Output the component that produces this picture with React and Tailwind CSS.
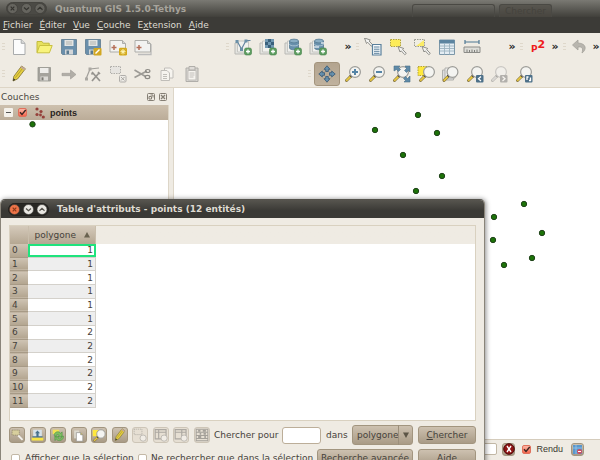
import React from 'react';

const TOOL_BUTTON = 'flex h-6 flex-1 items-center justify-center rounded-[3px]';
const BEVEL = 'rounded-[3px] border border-[#a2957f] bg-linear-to-b from-[#cdc1b0] to-[#a99b86]';

/* ---------- icon parts (18 x 18 canvas) ---------- */

function Icon({ children, size = 18, faded = false }) {
  return (
    <svg width={size} height={size} viewBox="0 0 18 18" fill="none" className={faded ? 'opacity-45 grayscale' : ''}>
      {children}
    </svg>
  );
}

function Lens({ x = 0, sign }) {
  return (
    <g transform={`translate(${x} 0)`}>
      <path d="M2.5 15.5 7 11" stroke="#8a7a48" strokeWidth="3" strokeLinecap="round" />
      <path d="M2.8 15.2 6.2 11.8" stroke="#e8c840" strokeWidth="1.8" strokeLinecap="round" />
      <path d="M6.4 11.6 7.8 10.2" stroke="#222" strokeWidth="2.6" />
      <circle cx="11" cy="7" r="5.4" fill="#f4f4f1" stroke="#9c9c98" strokeWidth="1.2" />
      {sign && <path d={sign} stroke="#5584a6" strokeWidth="2" />}
    </g>
  );
}

function Layers({ children }) {
  return (
    <>
      <path d="M1 5h11v11H1z" fill="#e4e4e0" stroke="#b9b9b5" />
      <path d="M3.5 3h11v11h-11z" fill="#f1f1ee" stroke="#c6c6c2" />
      {children}
      <rect x="10.5" y="10" width="7" height="7" rx="1.8" fill="#5c9c60" stroke="#478449" strokeWidth=".6" />
      <path d="M14 11.5v4M12 13.5h4" stroke="#fff" strokeWidth="1.3" />
    </>
  );
}

function Disk({ color = '#6a8fab' }) {
  return (
    <>
      <path d="M1.5 1.5h15v15h-14l-1-1z" fill={color} stroke="#5d7a8e" strokeWidth=".8" />
      <path d="M4.5 2h9v6h-9z" fill="#e3e4e2" />
      <path d="M6 4h6M6 6h6" stroke="#a5a7a5" strokeWidth=".8" />
      <path d="M5 11.5h8v5H5z" fill="#d3d6d8" />
      <path d="M6.5 12.5H9v3.5H6.5z" fill="#5a7a90" />
    </>
  );
}

function Badge({ path }) {
  return (
    <>
      <rect x="10" y="10" width="7.5" height="7.5" rx="1" fill="#4d7089" />
      <path d={path} stroke="#fff" strokeWidth="1.3" />
    </>
  );
}

function Cursor({ x = 0, y = 0 }) {
  return (
    <g transform={`translate(${x} ${y})`}>
      <path d="m1 1 2 5.5 1.2-1.2 3.6 3.9 1.5-1.3L5.6 4l1.2-1z" fill="#f4f4f2" stroke="#85857f" strokeWidth=".9" />
    </g>
  );
}

function Cylinder() {
  return (
    <>
      <path d="M5.5 3v7c0 2.400 9 2.400 9 0V3" fill="#6890ac" stroke="#4f748d" strokeWidth=".7" />
      <ellipse cx="10" cy="3" rx="4.5" ry="1.9" fill="#8aadc3" stroke="#4f748d" strokeWidth=".7" />
      <path d="M5.5 6.2c0 2.200 9 2.200 9 0" stroke="#b6ccda" strokeWidth=".8" />
    </>
  );
}

function Pencil() {
  return (
    <>
      <path d="m3 16 .8-4.6L11.6 1l3.8 2.8-7.8 10.1z" fill="#e5cf3f" stroke="#8a7c3c" strokeWidth=".9" />
      <path d="m5.4 12.6 8-10.3" stroke="#b09a30" strokeWidth=".9" />
      <path d="m3 16 .5-2.7 1.9 1.4z" fill="#333" />
      <path d="m10.6 2.4 3.8 2.8 1-1.4L11.6 1z" fill="#c2a7a0" />
    </>
  );
}

function MapSheet({ double }) {
  return (
    <>
      {double && <path d="M4 16.5h13V6" stroke="#bbb" strokeWidth="1.3" />}
      <path d="M1 2.5h12.5l3 3V14H1z" fill="#f2f2f0" stroke="#adada9" />
      <path d="M13.5 2.5v3h3" fill="#d5d5d2" stroke="#adada9" />
      <path d="M5 7v5M2.5 9.5h5" stroke="#b5705a" strokeWidth="1.5" />
    </>
  );
}

const dashedBox = 'M1.5 1.5h10v7h-10z';

const icons = {
  page: <Icon><path d="M3.5 1.5h7.7l3.8 3.8v11.2H3.5z" fill="#fcfcfc" stroke="#a9abac" /><path d="M11.2 1.5v3.8H15" fill="#dadada" stroke="#a9abac" /></Icon>,
  folder: <Icon><path d="M2 14.5V3.5h5l1.2 1.7h6V8" fill="#e7e15d" stroke="#c2bb3c" /><path d="m2 14.8 2.600-7.300h12.600l-2.800 7.300z" fill="#f8f37b" stroke="#c9c140" /></Icon>,
  disk: <Icon><Disk /></Icon>,
  diskAs: <Icon><Disk /><rect x="9.5" y="10" width="8" height="7.5" rx="1" fill="#d2a722" /><path d="m11.5 15.5 4-4" stroke="#fff" strokeWidth="1.5" /></Icon>,
  mapNew: <Icon><MapSheet /><rect x="10" y="9.8" width="8" height="7.8" rx="1.4" fill="#d3a91d" /><path d="M14 11v5.4M11.4 13.7h5.2M12.2 11.8l3.6 3.8M15.8 11.8l-3.6 3.8" stroke="#fff6b8" /></Icon>,
  mapList: <Icon><MapSheet double /></Icon>,
  vector: <Icon><Layers><path d="m3 3 4.5 8L12 2.5h4.5" stroke="#6585a0" strokeWidth="1.2" /><path d="M1.5 2h3v3h-3zM6 10h3v3H6zM10.5 1.5h3v3h-3z" fill="#6b90a8" /></Layers></Icon>,
  raster: <Icon><Layers><path d="M6 1h9v9H6z" fill="#7098b2" /><path d="M9 1h3v3H9zM6 4h3v3H6zM12 4h3v3h-3zM9 7h3v3H9z" fill="#3a607b" /></Layers></Icon>,
  postgis: <Icon><Layers><Cylinder /></Layers></Icon>,
  spatialite: <Icon><Layers><Cylinder /><path d="M5 9h5M12 5h3" stroke="#d9e4eb" strokeWidth="1.4" /></Layers></Icon>,
  identify: <Icon><Cursor x={-0.5} y={-1} /><path d="M8.5 6.5H17V17H8.5z" fill="#f7fafc" stroke="#5a809c" strokeWidth="1.2" /><path d="M10 9h5.500M10 11.200h5.500M10 13.300h5.500M10 15.300h5.500" stroke="#5a809c" /></Icon>,
  select: <Icon><path d={dashedBox} fill="#fdec58" stroke="#b3a53a" strokeDasharray="1.5 1" /><Cursor x={8} y={7.5} /></Icon>,
  deselect: <Icon><path d={dashedBox} fill="#f0eee4" stroke="#9b9b90" strokeDasharray="1.5 1" /><path d="M11 2v6H3z" fill="#fbec67" /><Cursor x={8} y={7.5} /></Icon>,
  table: <Icon><path d="M1.500 2h15v14.500h-15z" fill="#e4edf3" stroke="#7c97a8" /><path d="M1.500 2h15v3.500h-15z" fill="#5c84a0" /><path d="M2 8h14M2 10.500h14M2 13h14M6.500 5.500v11M11.500 5.500v11" stroke="#9bb2c0" strokeWidth=".9" /></Icon>,
  ruler: <Icon><path d="M2 4h14M2 2v4M16 2v4" stroke="#4f7893" strokeWidth="1.2" /><path d="M1 9h16v5.500H1z" fill="#ddddd8" stroke="#8c8c88" /><path d="M4 11.500V14M6.500 12v2M9 11.500V14M11.500 12v2M14 11.500V14" stroke="#7f7f7b" /></Icon>,
  undo: <Icon><path d="M7 2 1.500 7 7 12V9c4-.5 5.500 1 4 6 4.500-3 5-9.500-4-10z" fill="#b8b5ae" stroke="#a5a29c" strokeWidth=".8" /></Icon>,
  pencil: <Icon><Pencil /></Icon>,
  diskGrey: (
    <Icon>
      <path d="M3 2.500h12.500v13.500H3z" fill="#a5a39d" stroke="#96948e" strokeWidth=".8" />
      <path d="M5 3h8.500v5H5z" fill="#eeedea" />
      <path d="M5.500 11.500h7.500v4H5.500z" fill="#dcdad6" />
      <path d="M6.500 12.300h2v3h-2z" fill="#7c7a75" />
    </Icon>
  ),
  arrow: <Icon><path d="M2 8.300h8.500V5L16 9.500 10.500 14v-3.300H2z" fill="#b1aea7" stroke="#9e9b95" strokeWidth=".6" /></Icon>,
  node: <Icon><path d="m2 14 4-10 9-1" stroke="#a19f9a" strokeWidth="1.2" /><path d="M4.500 2.500h3v3h-3zM1 12.500h3v3H1z" fill="#aaa8a2" /><path d="m8 7 8 9M15 8l-7 8M9 7.500l-1.500 2M14 7l2 2" stroke="#95938e" strokeWidth="1.7" /></Icon>,
  deleteSel: <Icon faded><path d={dashedBox} fill="#ddd" stroke="#666" strokeDasharray="1.5 1" /><rect x="10.5" y="10.5" width="6.5" height="6.5" rx="1" fill="#eee" stroke="#666" /><path d="m12 12 3.500 3.500m0-3.500L12 15.500" stroke="#555" /></Icon>,
  cut: <Icon><path d="m1.500 5 11 6.500M1.500 12.500 14 6" stroke="#9d9b96" strokeWidth="1.6" /><ellipse cx="14.5" cy="12" rx="2.3" ry="1.6" stroke="#8c8a85" strokeWidth="1.2" /><ellipse cx="14.7" cy="6" rx="2.2" ry="1.5" stroke="#8c8a85" strokeWidth="1.2" /></Icon>,
  copy: <Icon faded><path d="M6.500 3h6L15 5.500V13H6.500z" fill="#fff" stroke="#888" /><path d="M3 5.500h6L11.500 8v7.500H3z" fill="#fff" stroke="#888" /><path d="M5 9.500h4M5 11.500h4M5 13.500h4" stroke="#888" /></Icon>,
  paste: <Icon faded><path d="M3 3h12v13.500H3z" fill="#bbb" stroke="#666" /><path d="M5 5.500h8V15H5z" fill="#fff" stroke="#888" /><path d="M6 1.500h6V5H6z" fill="#ccc" stroke="#666" /><path d="M6.500 8h5M6.500 10h5M6.500 12h4" stroke="#888" /></Icon>,
  pan: <Icon><path d="m9 .8 3 3.500h-1.700V6.500H7.700V4.300H6zM9 17.200l3-3.500h-1.700v-2.200H7.700v2.200H6zM.8 9l3.500-3v1.700h2.200v2.600H4.300V12zM17.200 9l-3.500-3v1.700h-2.200v2.600h2.200V12z" fill="#6690ad" stroke="#40607a" strokeWidth=".9" /></Icon>,
  zoomIn: <Icon><Lens sign="M11 4v6M8 7h6" /></Icon>,
  zoomOut: <Icon><Lens sign="M8 7h6" /></Icon>,
  zoomFull: <Icon><Lens x={-1} /><path d="M1 1h6L5.500 2.500l2 2-2 2-2-2L1 6zM17 1v6l-1.500-1.500-2 2-2-2 2-2L12 1zM17 17h-6l1.500-1.500-2-2 2-2 2 2L17 11z" fill="#5f8aa8" stroke="#4a6f88" strokeWidth=".6" /></Icon>,
  zoomSel: <Icon><path d="M1 1.500h12v9H1z" fill="#ffe83c" stroke="#b3a334" strokeDasharray="1.5 1" /><Lens x={1} /></Icon>,
  zoomLayer: <Icon><path d="M1.500 5h11v10h-11z" fill="#ddd" stroke="#b0b0ac" /><path d="M4 3h10v10H4z" fill="#eee" stroke="#b0b0ac" /><Lens x={0.5} /></Icon>,
  zoomLast: <Icon><Lens /><Badge path="m15 11.500-2.500 2.300L15 16" /></Icon>,
  zoomNext: <Icon faded><Lens /><Badge path="m12.500 11.500 2.500 2.300L12.500 16" /></Icon>,
  refresh: <Icon><Lens /><Badge path="M12 15v-3h1.500M15.500 12.500v3H14" /></Icon>,
};

const smallIcons = [
  ['Désélectionner tout', <Icon size={13}><path d={dashedBox} fill="#d8cf9d" stroke="#8b8267" strokeDasharray="2 1" /><path d="m10 9 6 6" stroke="#f3f1ec" strokeWidth="2.5" /></Icon>],
  ['Déplacer vers le haut', <Icon size={13}><path d="M3 1h12v10H3z" fill="#d7e2e9" /><path d="M9 2 5.500 6h2v4h3V6h2zM2 10h14v2H2z" fill="#47718d" /><path d="M1 12h16v4H1z" fill="#f7e446" /></Icon>],
  ['Inverser la sélection', <Icon size={13}><path d="M1 1h9v6H1z" fill="#f4e255" /><path d="M3 9c0-5 6-7 9-3l2-2v7H8l2-2C7 6 5 8 6 12zM16 10c0 6-7 8-10 4l-2 2v-6h6l-2 2c3 3 5 2 5-2z" fill="#7fbf62" stroke="#55984a" /></Icon>],
  ['Copier les lignes', <Icon size={13}><path d="M3 2h7v11H3z" fill="#dedbd0" /><path d="M6 5h6l3 3v9H6z" fill="#fff" stroke="#8f8e88" /><path d="M12 5v3h3" fill="#cbbd52" stroke="#8f8e88" /></Icon>],
  ['Zoomer sur la sélection', <Icon size={15}><path d="M1 2h11v8H1z" fill="#ffe83c" /><Lens x={0.5} /></Icon>],
  ['Mode édition', <Icon size={14}><Pencil /></Icon>],
  ['Supprimer', <Icon size={14} faded><path d={dashedBox} stroke="#666" strokeDasharray="1.5 1" /><circle cx="13" cy="13" r="4" fill="#fff" stroke="#777" /></Icon>, true],
  ['Nouvelle colonne', <Icon size={14} faded><path d="M1.500 2h14v12h-14zM1.500 5.500h14M6 2v12" stroke="#666" strokeWidth="1.5" /><circle cx="13" cy="13" r="4" fill="#fff" stroke="#777" /></Icon>, true],
  ['Supprimer la colonne', <Icon size={14} faded><path d="M1.500 2h14v12h-14zM1.500 5.500h14M10 2v12" stroke="#666" strokeWidth="1.5" /><circle cx="13" cy="13" r="4" fill="#fff" stroke="#777" /></Icon>, true],
  ['Calculatrice de champ', <Icon size={14} faded><path d="M1.500 1.500h15v15h-15zM2 5.500h14M2 9.500h14M2 13.500h14" stroke="#555" strokeWidth="1.3" /><path d="M4 3.500h3M10 3.500h4M6 7.500h2M11 7.500h3M4 11.500h4M12 11.500h2" stroke="#555" strokeWidth="2.5" /></Icon>, true],
];

/* Map features, in canvas pixels */
const mapPoints = [
  [244, 27], [201, 42], [263, 45], [229, 67], [268, 88], [242, 103],
  [320, 129], [350, 116], [368, 145], [319, 152], [330, 177], [358, 170],
];

const attributes = [1, 1, 1, 1, 1, 1, 2, 2, 2, 2, 2, 2];

/* ---------- widgets ---------- */

function Handle() {
  return (
    <span className="flex w-[3px] flex-col gap-0.5">
      <i className="h-px bg-[#dfd8cb]" />
      <i className="h-px bg-[#dfd8cb]" />
      <i className="h-px bg-[#dfd8cb]" />
    </span>
  );
}

function ToolGroup({ names, className, active }) {
  return (
    <div className={`flex shrink-0 ${className}`}>
      {names.map((name) => (
        <button
          key={name}
          type="button"
          aria-label={name}
          className={name === active ? `${TOOL_BUTTON} border border-[#a3947d] bg-linear-to-b from-[#b3a48f] to-[#c0b29e]` : TOOL_BUTTON}
        >
          {icons[name]}
        </button>
      ))}
    </div>
  );
}

function More() {
  return <button type="button" aria-label="Plus d'outils" className="w-2 font-bold text-[11px] leading-3 text-[#222]">»</button>;
}

function WindowButtons({ active }) {
  const face = active ? '#e9e7e2' : '#66655f';
  const mark = active ? '#55534d' : '#34332f';
  return (
    <svg width="41" height="13" viewBox="0 0 41 13" fill="none">
      <rect x=".5" y=".5" width="40" height="12" rx="6" fill={active ? '#282723' : '#4b4a45'} stroke={active ? '#22211e' : '#45443f'} />
      <circle cx="6.5" cy="6.5" r="5" fill={active ? '#ee7448' : face} stroke="#3a3935" strokeWidth=".6" />
      <circle cx="20.5" cy="6.5" r="5" fill={face} stroke="#3a3935" strokeWidth=".6" />
      <circle cx="34" cy="6.5" r="5" fill={face} stroke="#3a3935" strokeWidth=".6" />
      <path d="m4.700 4.700 3.600 3.600m0-3.600L4.700 8.300" stroke={active ? '#8c3a1c' : mark} strokeWidth="1.2" />
      <path d="m18 5.500 2.500 2.300L23 5.500M31.500 7.700 34 5.400l2.500 2.300" stroke={mark} strokeWidth="1.2" />
    </svg>
  );
}

function RedCheck({ id, label }) {
  return (
    <span className="grid size-[9px] shrink-0">
      <input
        id={id}
        type="checkbox"
        defaultChecked
        aria-label={label}
        className="col-start-1 row-start-1 size-[9px] appearance-none rounded-[2px] border border-[#e0705c] bg-linear-to-b from-[#fbb5a5] to-[#f4654c]"
      />
      <svg className="pointer-events-none col-start-1 row-start-1" width="9" height="9" viewBox="0 0 9 9" fill="none">
        <path d="m2 4.300 2 2.200L7.700 2" stroke="#3a2522" strokeWidth="1.4" />
      </svg>
    </span>
  );
}

function MenuBar() {
  const menus = ['Fichier', 'Éditer', 'Vue', 'Couche', 'Extension', 'Aide'];
  return (
    <nav className="flex h-4 items-center gap-[7px] bg-[#3c3b37] pl-[3px] text-[#dfdbd2]">
      {menus.map((menu) => (
        <button key={menu} type="button">
          {menu === 'Extension' ? <>E<u>x</u>tension</> : <><u>{menu[0]}</u>{menu.slice(1)}</>}
        </button>
      ))}
    </nav>
  );
}

function LayerPanel() {
  return (
    <aside className="flex w-[169px] shrink-0 flex-col">
      <header className="flex h-[17px] items-center pr-0.5 pl-px text-[#4b4842]">
        <h2 className="flex-1">Couches</h2>
        <div className="flex gap-1">
          <button type="button" aria-label="Détacher">
            <svg width="8" height="8" viewBox="0 0 8 8" fill="none" stroke="#857f75"><rect x=".5" y=".5" width="7" height="7" rx="1" /><path d="M3.500 2h2.500v2.500M2 3.500h2.500V6H2z" /></svg>
          </button>
          <button type="button" aria-label="Fermer">
            <svg width="8" height="8" viewBox="0 0 8 8" fill="none" stroke="#857f75"><rect x=".5" y=".5" width="7" height="7" rx="1" /><path d="m2 2 4 4m0-4L2 6" strokeWidth="1.3" /></svg>
          </button>
        </div>
      </header>
      <div className="flex-1 border-r border-[#ddd6c8] bg-white">
        <div className="flex h-[15px] items-center bg-linear-to-b from-[#cdc0ae] to-[#bbac98] pl-1">
          <button type="button" aria-label="Replier" className="flex size-[9px] items-center justify-center rounded-[1px] bg-[#f4f1eb]">
            <span className="h-px w-[5px] bg-[#555]" />
          </button>
          <span className="w-[5px]" />
          <RedCheck label="points" />
          <svg className="ml-2" width="10" height="12" viewBox="0 0 10 12" fill="#95413b">
            <circle cx="2" cy="2" r="1.6" /><circle cx="6" cy="4.5" r="1.6" /><circle cx="2" cy="7.5" r="1.6" /><circle cx="5.5" cy="8" r="1.4" /><circle cx="8.3" cy="10" r="1.6" />
          </svg>
          <span className="ml-[5px] font-['Liberation_Sans',sans-serif] font-bold text-[#29251f]">points</span>
        </div>
        <svg className="ml-[29px]" width="7" height="8" viewBox="0 0 7 8">
          <circle cx="3.5" cy="4.3" r="2.7" fill="#1c7208" stroke="#20431a" />
        </svg>
      </div>
    </aside>
  );
}

function StatusBar() {
  return (
    <footer className="flex h-[21px] shrink-0 items-center justify-end border-t border-[#d5ccbc] pr-4 pb-0.5">
      <input type="text" aria-label="Échelle" className="h-3 w-24 rounded-[2px] border border-[#c1b7a5] bg-white" />
      <button type="button" aria-label="Arrêter le rendu" className={`ml-[5px] flex size-[13px] items-center justify-center ${BEVEL}`}>
        <svg width="12" height="12" viewBox="0 0 12 12" className="shrink-0"><circle cx="6" cy="6" r="5.3" fill="#8f1414" stroke="#4c0b0b" /><path d="m4 3 4 6m0-6L4 9" stroke="#fff" strokeWidth="1.4" /></svg>
      </button>
      <span className="w-[7px]" />
      <RedCheck id="render" />
      <label htmlFor="render" className="ml-[5px] font-['Liberation_Sans',sans-serif] text-[#3a372f]">Rendu</label>
      <button type="button" aria-label="Projection" className={`ml-2 flex size-[13px] items-center justify-center ${BEVEL}`}>
        <svg width="11" height="11" viewBox="0 0 11 11" className="shrink-0"><path d="M1 1h9v9H1z" fill="#5a97cc" /><path d="M1 4h9M4 1v9" stroke="#a5cdec" strokeWidth=".7" /><circle cx="7.5" cy="7.5" r="2.5" fill="#cf4d60" /><path d="M6 7.500h3" stroke="#fff" /></svg>
      </button>
    </footer>
  );
}

function AttributeTable() {
  return (
    <div className="h-[196px] border border-[#d9d1c0] bg-linear-to-b from-[#efebe3] from-[18px] to-white to-[18px]">
      <table className="h-[182px] w-[86px] table-fixed border-collapse text-[#46423b]">
        <thead>
          <tr className="h-[18px] bg-linear-to-b from-[#d5cabb] to-[#b5a792]">
            <th aria-label="Ligne" className="w-[18px] border-r border-[#c9beac] p-0" />
            <th className="border-r border-[#c9beac] p-0 pl-1.5 text-left font-normal">
              <span className="flex items-center">
                <span className="flex-1">polygone</span>
                <svg className="mr-[5px]" width="6" height="6" viewBox="0 0 6 6" fill="#69624f"><path d="M3 0 6 5.500H0z" /></svg>
              </span>
            </th>
          </tr>
        </thead>
        <tbody>
          {attributes.map((value, row) => (
            <tr key={row} className="odd:bg-white even:bg-[#eeeeee]">
              <th className="border-b border-[#a79a86] bg-linear-to-b from-[#d0c5b5] to-[#b2a48f] p-0 pl-0.5 text-left font-normal leading-3">{row}</th>
              <td className={row === 0 ? 'border-r border-b border-[#d4d1cb] p-0 pr-0.5 text-right leading-3 outline-2 -outline-offset-2 outline-[#1fe37d]' : 'border-r border-b border-[#d4d1cb] p-0 pr-0.5 text-right leading-3'}>
                {value}
              </td>
            </tr>
          ))}
        </tbody>
      </table>
    </div>
  );
}

function AttributeDialog() {
  return (
    <section className="absolute top-[199px] left-0 w-[485px] rounded-t-[5px] border border-[#8a857a] border-t-[#55534d] bg-[#efebe3] shadow-[1px_0_5px_rgba(0,0,0,0.45)]">
      <header className="flex h-[18px] items-center gap-2 rounded-t-[4px] bg-linear-to-b from-[#57554f] to-[#3a3935] to-60% pl-[7px]">
        <WindowButtons active />
        <h2 className="font-bold text-[#dfdbd2]">Table d'attributs - points (12 entités)</h2>
      </header>
      <div className="px-2 pt-[7px] pb-3 text-[#46423b]">
        <AttributeTable />
        <div className="mt-1 flex h-5 items-center">
          <div className="flex w-[201px] justify-between">
            {smallIcons.map(([name, icon, disabled]) => (
              <button
                key={name}
                type="button"
                aria-label={name}
                disabled={disabled}
                className={disabled ? 'flex size-4 items-center justify-center rounded-[3px] border border-[#cdc5b7] bg-[#e6dfd3]' : `flex size-4 items-center justify-center ${BEVEL}`}
              >
                {icon}
              </button>
            ))}
          </div>
          <label htmlFor="search" className="ml-1 w-[68px] whitespace-nowrap">Chercher pour</label>
          <input id="search" type="text" className="h-[17px] w-[39px] rounded-[3px] border border-[#bcae99] bg-white px-1" />
          <label htmlFor="field" className="ml-[5px] w-[26px]">dans</label>
          <span className="grid w-[61px]">
            <select id="field" className={`col-start-1 row-start-1 h-5 appearance-none pl-1 text-[#46423b] ${BEVEL}`}>
              <option>polygone</option>
            </select>
            <span className="pointer-events-none col-start-1 row-start-1 flex h-5 w-[15px] items-center justify-center justify-self-end border-l border-[#9c8f7b]">
              <svg width="6" height="6" viewBox="0 0 6 6" fill="#5c5546"><path d="M0 .5h6L3 6z" /></svg>
            </span>
          </span>
          <button type="button" className={`ml-[5px] h-[18px] flex-1 ${BEVEL}`}><u>C</u>hercher</button>
        </div>
        <div className="mt-1 flex h-[18px] items-center">
          <input id="show-selection" type="checkbox" className="ml-0.5 size-[9px] appearance-none rounded-[2px] border border-[#c3b8a6] bg-white" />
          <label htmlFor="show-selection" className="ml-[5px] w-[113px] whitespace-nowrap">Afficher que la sélection</label>
          <input id="search-selection" type="checkbox" className="size-[9px] appearance-none rounded-[2px] border border-[#c3b8a6] bg-white" />
          <label htmlFor="search-selection" className="ml-1 w-[166px] whitespace-nowrap">Ne rechercher que dans la sélection</label>
          <button type="button" className={`h-[18px] w-[96px] whitespace-nowrap ${BEVEL}`}>Recherche avancée</button>
          <button type="button" className={`ml-[5px] h-[18px] flex-1 ${BEVEL}`}>Aide</button>
        </div>
      </div>
    </section>
  );
}

export default function App() {
  return (
    <div className="relative flex h-screen flex-col overflow-hidden bg-[#efebe3] font-['DejaVu_Sans',sans-serif] text-[9px] leading-3">
      <header className="flex h-[17px] shrink-0 items-center bg-linear-to-b from-[#7a7973] to-[#41403b] pl-[6px]">
        <WindowButtons />
        <h1 className="ml-2 flex-1 font-bold text-[#a6a39b]">Quantum GIS 1.5.0-Tethys</h1>
        {/* controls of the window behind show through the title bar */}
        <div className="mr-12 flex gap-1 self-end">
          <span className="h-[13px] w-[83px] rounded-t-[3px] border border-b-0 border-[#4a4944]" />
          <span className="h-[13px] w-[53px] rounded-t-[3px] border border-b-0 border-[#4a4944] bg-[#4c4a43]/60 text-center text-[#45433d]">Chercher</span>
        </div>
      </header>
      <MenuBar />

      <div className="flex h-[27px] shrink-0 items-center pl-0.5">
        <Handle />
        <ToolGroup className="ml-0.5 w-[148px]" names={['page', 'folder', 'disk', 'diskAs', 'mapNew', 'mapList']} />
        <span className="w-[71px]" />
        <Handle />
        <ToolGroup className="ml-0.5 w-[99px]" names={['vector', 'raster', 'postgis', 'spatialite']} />
        <span className="w-3.5" />
        <More />
        <span className="w-1" />
        <Handle />
        <ToolGroup className="ml-0.5 w-[123px]" names={['identify', 'select', 'deselect', 'table', 'ruler']} />
        <span className="w-6" />
        <More />
        <span className="w-1" />
        <Handle />
        <button type="button" aria-label="P2" className="ml-2 flex w-4 items-center font-bold text-[#ee1c1c]">
          <span className="pt-1">P</span><span className="pb-1 text-[11px]">2</span>
        </button>
        <span className="w-1" />
        <More />
        <span className="w-1" />
        <Handle />
        <ToolGroup className="ml-0.5 w-6" names={['undo']} />
        <More />
      </div>

      <div className="flex h-7 shrink-0 items-center border-b border-[#ddd5c6] pl-0.5">
        <Handle />
        <ToolGroup className="ml-0.5 w-[197px]" names={['pencil', 'diskGrey', 'arrow', 'node', 'deleteSel', 'cut', 'copy', 'paste']} />
        <span className="w-[104px]" />
        <Handle />
        <ToolGroup
          className="ml-[3px] w-[222px]"
          active="pan"
          names={['pan', 'zoomIn', 'zoomOut', 'zoomFull', 'zoomSel', 'zoomLayer', 'zoomLast', 'zoomNext', 'refresh']}
        />
      </div>

      <div className="flex min-h-0 flex-1 gap-1">
        <LayerPanel />
        <main className="min-w-0 flex-1 border-l border-[#ddd6c8] bg-white">
          <svg className="size-full">
            {mapPoints.map(([x, y]) => (
              <circle key={`${x}-${y}`} cx={x} cy={y} r="2.7" fill="#1c7208" stroke="#20431a" />
            ))}
          </svg>
        </main>
      </div>
      <StatusBar />
      <AttributeDialog />
    </div>
  );
}
